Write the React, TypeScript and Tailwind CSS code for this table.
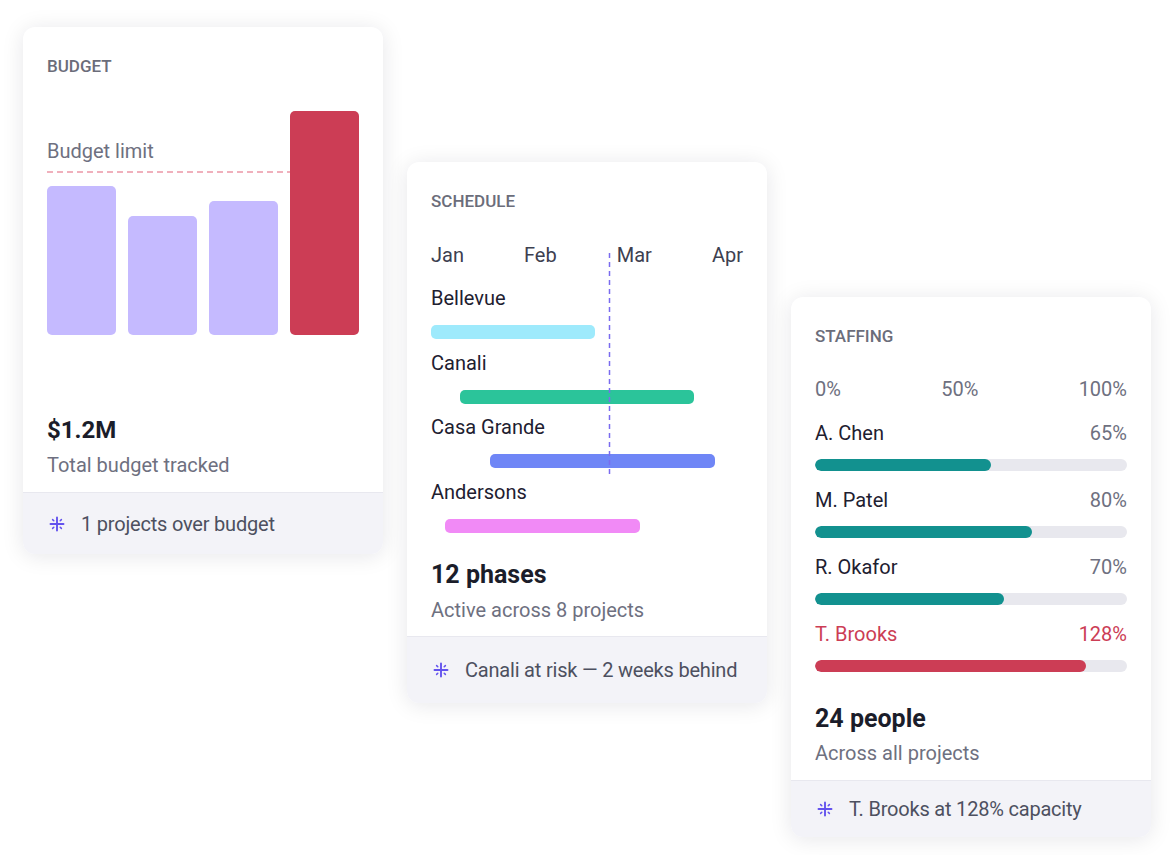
import React from "react";

const font = { fontFamily: "Roboto, 'Noto Sans', sans-serif" };

function Spark() {
  return (
    <svg width="16" height="16" viewBox="0 0 16 16" className="ml-[2px] shrink-0" fill="none" stroke="#6352ee" strokeLinecap="round">
      <path d="M8 1.5v13M1.5 8h13" strokeWidth="1.9" />
      <path d="M3.6 3.6l1.2 1.2M12.4 3.6l-1.2 1.2M3.6 12.4l1.2-1.2M12.4 12.4l-1.2-1.2" strokeWidth="1.5" />
    </svg>
  );
}

function Card({
  title,
  footer,
  footerH,
  className,
  children,
}: {
  title: string;
  footer: string;
  footerH: string;
  className: string;
  children: React.ReactNode;
}) {
  return (
    <div
      className={`w-[360px] shrink-0 rounded-xl bg-white shadow-[0_2px_22px_rgba(20,24,40,0.10)] overflow-hidden flex flex-col ${className}`}
    >
      <div className="px-6 pt-[29px]">
        <p className="text-[17px] leading-5 font-medium text-[#6b6d7a] uppercase">{title}</p>
        {children}
      </div>
      <div className={`${footerH} border-t border-[#e8e8ef] bg-[#f3f3f8] flex items-center gap-4 px-6`}>
        <Spark />
        <span className="whitespace-nowrap text-[20px] leading-6 tracking-[-0.01em] text-[#4d5060]">{footer}</span>
      </div>
    </div>
  );
}

const budgetBars = [
  { h: 149, color: "bg-[#c5baff]" },
  { h: 119, color: "bg-[#c5baff]" },
  { h: 134, color: "bg-[#c5baff]" },
  { h: 224, color: "bg-[#cc3d55]" },
];

const phases = [
  { name: "Bellevue", left: 0, width: 164, color: "bg-[#9eeafc]" },
  { name: "Canali", left: 29, width: 234, color: "bg-[#2bc49a]" },
  { name: "Casa Grande", left: 59, width: 225, color: "bg-[#6f86f6]" },
  { name: "Andersons", left: 14, width: 195, color: "bg-[#f18af6]" },
];

const staff = [
  { name: "A. Chen", pct: "65%", fill: 56.5, over: false },
  { name: "M. Patel", pct: "80%", fill: 69.7, over: false },
  { name: "R. Okafor", pct: "70%", fill: 60.6, over: false },
  { name: "T. Brooks", pct: "128%", fill: 87, over: true },
];

export default function App() {
  return (
    <div className="min-h-screen bg-white" style={font}>
      <div className="flex items-start gap-6 pl-[23px] pt-[27px]">
        {/* Budget */}
        <Card title="Budget" footer="1 projects over budget" footerH="h-[62px]" className="">
          <div className="relative mt-5 h-[239px]">
            <div className="flex h-full items-end gap-3">
              {budgetBars.map((b, i) => (
                <div key={i} className={`flex-1 rounded-[5px] ${b.color}`} style={{ height: b.h }} />
              ))}
            </div>
            <span className="absolute left-0 top-[43px] text-[20px] leading-6 text-[#6e7080]">Budget limit</span>
            <svg className="absolute left-0 top-[75px]" width="243" height="2">
              <line x1="0" y1="1" x2="243" y2="1" stroke="#ec97a6" strokeWidth="1.5" strokeDasharray="6 4" />
            </svg>
          </div>
          <p className="mt-[79px] text-[24px] leading-8 font-bold text-[#1b1d2a]">$1.2M</p>
          <p className="mt-[7px] pb-[15px] text-[20px] leading-6 text-[#6e7080]">Total budget tracked</p>
        </Card>

        {/* Schedule */}
        <Card title="Schedule" footer="Canali at risk — 2 weeks behind" footerH="h-[67px]" className="mt-[135px]">
          <div className="relative mt-8">
            <div className="flex justify-between text-[20px] leading-6 text-[#3d4050]">
              <span>Jan</span>
              <span>Feb</span>
              <span>Mar</span>
              <span>Apr</span>
            </div>
            <div className="mt-[19px] flex flex-col gap-[11.5px]">
              {phases.map((p) => (
                <div key={p.name}>
                  <p className="text-[20px] leading-6 text-[#1e2030]">{p.name}</p>
                  <div className="relative mt-[15px] h-[14px]">
                    <div
                      className={`absolute top-0 h-full rounded-[5px] ${p.color}`}
                      style={{ left: p.left, width: p.width }}
                    />
                  </div>
                </div>
              ))}
            </div>
            <svg className="absolute left-[177px] top-[10px]" width="3" height="225">
              <line x1="1.5" y1="0" x2="1.5" y2="225" stroke="#7a6bef" strokeWidth="1.5" strokeDasharray="5 4" />
            </svg>
          </div>
          <p className="mt-[26px] text-[25px] leading-8 font-bold text-[#1b1d2a]">12 phases</p>
          <p className="mt-[7px] pb-[14px] text-[20px] leading-6 text-[#6e7080]">Active across 8 projects</p>
        </Card>

        {/* Staffing */}
        <Card title="Staffing" footer="T. Brooks at 128% capacity" footerH="h-[57px]" className="mt-[270px]">
          <div className="mt-[31px] flex justify-between text-[20px] leading-6 text-[#6e7080]">
            <span>0%</span>
            <span>50%</span>
            <span>100%</span>
          </div>
          <div className="mt-5 flex flex-col gap-[17px]">
            {staff.map((s) => (
              <div key={s.name}>
                <div className="flex justify-between text-[20px] leading-6">
                  <span className={s.over ? "text-[#cc3d55]" : "text-[#1e2030]"}>{s.name}</span>
                  <span className={s.over ? "text-[#cc3d55]" : "text-[#6e7080]"}>{s.pct}</span>
                </div>
                <div className="mt-[14px] h-3 rounded-full bg-[#e8e8ee] overflow-hidden">
                  <div
                    className={`h-full rounded-full ${s.over ? "bg-[#cc3d55]" : "bg-[#12918f]"}`}
                    style={{ width: `${s.fill}%` }}
                  />
                </div>
              </div>
            ))}
          </div>
          <p className="mt-[31px] text-[25px] leading-8 font-bold text-[#1b1d2a]">24 people</p>
          <p className="mt-[6px] pb-[15px] text-[20px] leading-6 text-[#6e7080]">Across all projects</p>
        </Card>
      </div>
    </div>
  );
}
